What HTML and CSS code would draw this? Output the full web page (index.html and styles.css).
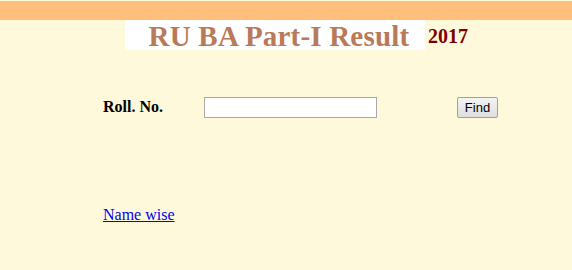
FILE: index.html
```html
<!DOCTYPE html>
<html>
<head>
<meta charset="utf-8">
<title>RU BA Part-I Result 2017</title>
<link rel="stylesheet" href="styles.css">
</head>
<body>
<div class="topbar"></div>
<div class="titlerow">
  <div class="titlebox">RU BA Part-I Result</div>
  <div class="year">2017</div>
</div>
<form class="search">
  <label class="label" for="roll">Roll. No.</label>
  <input class="field" id="roll" type="text">
  <button class="btn" type="button">Find</button>
</form>
<div class="links">
  <a class="link" href="#">Name wise</a>
</div>
</body>
</html>
```
FILE: styles.css
```css
html, body {
  margin: 0;
  padding: 0;
  background: #fff9dc;
  height: 100%;
}
body {
  padding-top: 1px;
  font-family: "Liberation Serif", "Times New Roman", serif;
  box-sizing: border-box;
}
.topbar {
  height: 19px;
  background: #ffbe79;
}
.titlerow {
  display: flex;
  align-items: center;
  margin-left: 125px;
  height: 30px;
}
.titlebox {
  width: 300px;
  height: 30px;
  background: #ffffff;
  color: #b87a58;
  font-family: "Liberation Serif", "Times New Roman", serif;
  font-weight: bold;
  font-size: 29px;
  line-height: 32px;
  text-align: center;
  box-sizing: border-box;
  padding-left: 8px;
  letter-spacing: 0.2px;
}
.year {
  margin-left: 3px;
  color: #7d0000;
  font-weight: bold;
  font-size: 20px;
  line-height: 30px;
  padding-top: 2px;
}
.search {
  display: flex;
  align-items: center;
  margin: 46px 0 0 103px;
  height: 22px;
}
.label {
  width: 101px;
  font-weight: bold;
  font-size: 16px;
}
.field {
  width: 173px;
  height: 21px;
  box-sizing: border-box;
  border: 1px solid #a9a9a9;
  background: #fff;
  margin: 0;
  padding: 1px 2px;
}
.btn {
  margin-left: 80px;
  width: 41px;
  height: 21px;
  box-sizing: border-box;
  padding: 0;
  font-family: "Liberation Sans", Arial, sans-serif;
  font-size: 13px;
  color: #000;
  background: linear-gradient(#f4f4f4, #dedede);
  border: 1px solid #a0a0a0;
  border-radius: 2px;
}
.links {
  margin: 88px 0 0 103px;
}
.link {
  color: #0000ee;
  font-size: 16px;
}
```
